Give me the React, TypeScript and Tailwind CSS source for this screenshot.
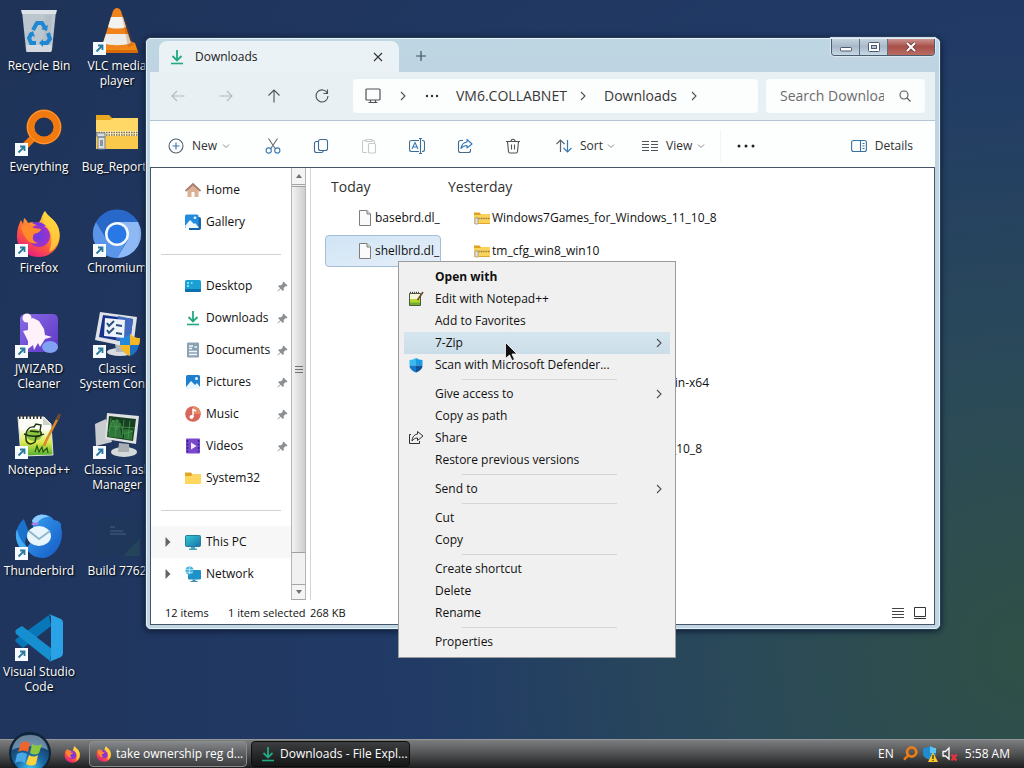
import { Fragment, type ReactNode } from "react";

/* ---------- Shared drawings ---------- */

function FirefoxArt() {
  return (
    <>
      <defs>
        <linearGradient id="fxBody" x1="0.85" y1="0" x2="0.25" y2="1">
          <stop offset="0" stopColor="#fff44f" />
          <stop offset="0.35" stopColor="#ffa436" />
          <stop offset="0.65" stopColor="#ff5a3c" />
          <stop offset="1" stopColor="#e31587" />
        </linearGradient>
        <radialGradient id="fxGlobe">
          <stop offset="0" stopColor="#6a3be0" />
          <stop offset="1" stopColor="#a330c8" />
        </radialGradient>
      </defs>
      <path
        d="M30 1c2 5 10 8 13 16 6 15-4 30-19 30C10 47 1 37 2 25c0-6 2-11 4-15l2 4 1-6c2 1 3 3 4 5 3-1 6-1 8 1 3-1 4-3 5-5 1-3 2-6 4-8z"
        fill="url(#fxBody)"
      />
      <path d="M30 1c2 5 10 8 13 16 4 11-1 22-9 25 3-8 4-20-2-25-5-4-5-10-2-16z" fill="#ffd43c" opacity="0.8" />
      <circle cx="24" cy="26" r="11" fill="url(#fxGlobe)" />
      <path d="M6 17c5-3 9-2 13 1l7 1c-1 4-5 4-7 5-3 5 0 8 4 9-7 2-14-3-17-16z" fill="#ff8a2c" />
      <path d="M17 13c5-2 10-1 14 3l-5 0c-3 0-5-1-9-3z" fill="#7a35dc" />
    </>
  );
}

function DownloadArt() {
  return (
    <>
      <path d="M8 1v10M3.5 7 8 11.5 12.500 7" fill="none" stroke="#22a884" strokeWidth="1.8" />
      <path d="M2 14.500h12" stroke="#22a884" strokeWidth="1.600" />
    </>
  );
}

function EverythingArt() {
  return (
    <>
      <path d="M18 29 6 41" stroke="#f07a10" strokeWidth="7" />
      <circle cx="29" cy="18" r="13.5" fill="none" stroke="#f07a10" strokeWidth="8" />
      <circle cx="29" cy="18" r="16.500" fill="none" stroke="#ff9a3c" strokeWidth="1" />
    </>
  );
}

function NotepadArt() {
  return (
    <>
      <defs>
        <linearGradient id="nppPage" x1="0" y1="0" x2="0" y2="1">
          <stop offset="0.3" stopColor="#fbfdf6" />
          <stop offset="0.65" stopColor="#dbe84a" />
          <stop offset="1" stopColor="#4caf2e" />
        </linearGradient>
      </defs>
      <path d="M3 5h26l7 7 2 31-32 1z" fill="url(#nppPage)" stroke="#dfe3da" />
      <path d="M4 5h24" stroke="#333" strokeWidth="4" strokeDasharray="1.5 2" />
      <path d="M28 5v8h8z" fill="#ccd3c4" />
      <ellipse cx="19" cy="23" rx="8" ry="6" fill="#8ac43f" />
      <path d="M11 27c-1-8 3-13 8-12l2-3 5 1-1 6c3 3 0 6-4 6l-1 5c-5 4-9 1-9-3zM9 22c6 3 15 3 20 0M15 19l9 1" fill="none" stroke="#1d2f12" strokeWidth="1.400" />
      <path d="m20 40 2-6 2 6 3-5 1 5 4-4 1 5" fill="none" stroke="#225511" strokeWidth="1.200" />
      <path d="M44 4 31 29l-2 5" stroke="#d98a25" strokeWidth="2.600" />
      <path d="M45 2 42 8" stroke="#6b4a2a" strokeWidth="2.600" />
    </>
  );
}

function ZipFolderArt() {
  return (
    <>
      <path d="M3 6h13l4 4h25v12H3z" fill="#eaa820" />
      <path d="M3 11h14l3-2h25v31H3z" fill="#ffd866" />
      <path d="M3 25h42v15H3z" fill="#f8c94a" />
      <path d="M3 24.500h42" stroke="#fff1bd" strokeWidth="5" />
      <path d="M3 23.500h42M3 26h42" stroke="#7b6a49" strokeWidth="1.500" strokeDasharray="1.500 1" />
      <path d="M4 24h8v4H4zM5 28h7v12H5z" fill="#d9dfe5" stroke="#7b838c" />
      <path d="M7 31h3v6H7z" fill="#8c949d" />
    </>
  );
}

function Badge() {
  return (
    <>
      <rect x="0" y="34" width="13" height="13" fill="#f7fbff" />
      <path d="M3.500 43.500 9 38M5 37.500h4.500V42" fill="none" stroke="#2b7a9e" strokeWidth="1.800" />
    </>
  );
}

function PictureArt() {
  return (
    <>
      <rect x="1" y="1" width="14" height="14" rx="1.500" fill="#1c80cf" />
      <path d="m1 13 5-6 4 4 2-2 3 4v2H1z" fill="#e6f5ff" />
      <circle cx="11.500" cy="4.500" r="1.500" fill="#e6f5ff" />
    </>
  );
}

function MonitorArt() {
  return (
    <>
      <defs>
        <linearGradient id="pcScreen" x1="0" y1="0" x2="1" y2="1">
          <stop offset="0" stopColor="#36cbd4" />
          <stop offset="1" stopColor="#1671a8" />
        </linearGradient>
      </defs>
      <rect x="0.500" y="1.500" width="15" height="11" rx="1" fill="url(#pcScreen)" stroke="#247d9b" />
      <path d="M6 13h4v1.500H6zM4 14.500h8V16H4z" fill="#44a3c1" />
    </>
  );
}

/* ---------- Desktop ---------- */

type DesktopItem = { label: string; art: ReactNode; shortcut?: boolean };

const desktopItems: DesktopItem[] = [
  {
    label: "Recycle Bin",
    art: (
      <>
        <path d="M7 3h34l-4 39c0 1-1 2-2 2H12c-1 0-1-1-1-2z" fill="#bcc6cf" />
        <path d="M6 2h36l-1 4H7z" fill="#dde3e7" />
        <path d="m30 7 7 0-3 36h-6z" fill="#aab4be" opacity="0.5" />
        <path d="m11 37 26 0-1 7H12z" fill="#dadfe2" opacity="0.800" />
        <path d="m18 22 4-7h5l3 5M33 25l2 6-3 4h-6M21 35h-5l-2-5 3-5" fill="none" stroke="#2087d3" strokeWidth="4" />
        <path d="m26 21 6 2 1-6zM28 31l-4 4 4 4zM13 26l5-3 2 6z" fill="#2087d3" />
      </>
    ),
  },
  { label: "Everything", shortcut: true, art: <EverythingArt /> },
  { label: "Firefox", shortcut: true, art: <FirefoxArt /> },
  {
    label: "JWIZARD Cleaner",
    shortcut: true,
    art: (
      <>
        <defs>
          <linearGradient id="jw" x1="0" y1="0" x2="1" y2="1">
            <stop offset="0" stopColor="#8a6be8" />
            <stop offset="1" stopColor="#5e35c4" />
          </linearGradient>
        </defs>
        <rect x="5" y="3" width="38" height="38" rx="5" fill="url(#jw)" />
        <ellipse cx="35" cy="36" rx="8" ry="6" fill="#7fa3f2" />
        <circle cx="12" cy="7" r="4.500" fill="#fff4fb" />
        <path d="m13 9 5-2 6 3 5 8 1 6 7 2-7 2-5 8-2-4-4 7-1-5-5 4 0-8-5-10 5-1z" fill="#fff1f9" />
      </>
    ),
  },
  { label: "Notepad++", shortcut: true, art: <NotepadArt /> },
  {
    label: "Thunderbird",
    shortcut: true,
    art: (
      <>
        <defs>
          <linearGradient id="tb" x1="0" y1="0" x2="1" y2="1">
            <stop offset="0" stopColor="#39a5f4" />
            <stop offset="1" stopColor="#1458c4" />
          </linearGradient>
        </defs>
        <path d="M9 6c-8 6-10 18-5 28l10 4c-5-6-5-12 0-16 0-6-3-9-5-16z" fill="#1a72cc" />
        <path d="M2 16c-3 8 0 17 7 22l8-1C8 32 4 25 2 16z" fill="#43aaf2" />
        <path d="M17 8c3-8 16-9 22-1 6 1 8 4 7 7 4 14-5 30-18 31-8 0-14-4-17-10 8-6 8-18 6-27z" fill="url(#tb)" />
        <path d="M17 8c3-7 12-8 17-4-5 0-9 1-13 8z" fill="#8ccaff" />
        <path d="M16 11c3-2 6-2 8 0-3 1-6 2-8 0z" fill="#bb7ae8" />
        <ellipse cx="24" cy="23" rx="12" ry="10" fill="#e8f5fd" />
        <path d="m14 18 10 8 11-8" fill="none" stroke="#91b8ca" strokeWidth="2" />
      </>
    ),
  },
  {
    label: "Visual Studio Code",
    shortcut: true,
    art: (
      <>
        <path d="m36 12-28 22-7-6c-1-1-1-2 0-3L34 1z" fill="#0877b9" />
        <path d="m2 15 5-3 30 23-2 12L1 20c-1-2-1-4 1-5z" fill="#168fd1" />
        <path d="m34 0 12 5c1 1 2 2 2 3v31c0 2-1 3-2 4l-12 5c1-1 2-2 2-4V4c0-2-1-3-2-4z" fill="#29a3e6" />
      </>
    ),
  },
  {
    label: "VLC media player",
    shortcut: true,
    art: (
      <>
        <path d="m9 35 3-2h25l5 2 3 9H4z" fill="#f28a16" />
        <path d="M4 42h41v3H4z" fill="#d96a08" />
        <path d="M20 3c2-4 6-4 8 0l11 35c-6 4-24 4-30 0z" fill="#f0831c" />
        <path d="m18 9 12 0 3 10c-5 2-13 2-18 0z" fill="#f2f2ee" />
        <path d="m13 26 22 0 3 9c-7 3-21 3-28 0z" fill="#eeece8" />
        <path d="M29 8h2l10 29-6 2z" fill="#a34c08" opacity="0.25" />
      </>
    ),
  },
  { label: "Bug_Reports", art: <ZipFolderArt /> },
  {
    label: "Chromium",
    shortcut: true,
    art: (
      <>
        <circle cx="24" cy="24" r="24" fill="#2f75dd" />
        <path d="M24 12h21a24 24 0 0 1-21 36l11-18z" fill="#8fb9f5" />
        <path d="M3 12a24 24 0 0 0 21 36l10-18-20 0z" fill="#5b95ea" />
        <path d="M3 12a24 24 0 0 1 42 0H24l-10 18z" fill="#2868c8" />
        <circle cx="24" cy="24" r="12" fill="#f4f9ff" />
        <circle cx="24" cy="24" r="9.500" fill="#2878e6" />
      </>
    ),
  },
  {
    label: "Classic System Con...",
    shortcut: true,
    art: (
      <>
        <ellipse cx="27" cy="41" rx="13" ry="4" fill="#d8dce0" />
        <path d="m22 31 12 2-3 8h-8z" fill="#aeb5bd" />
        <path d="m7 1 37 5-4 31L2 29z" fill="#dfe3e6" />
        <path d="m10 4 30 4-3 24L6 26z" fill="#17318d" />
        <path d="m25 5 15 3-3 24-14-3z" fill="#4169bd" />
        <path d="m12 7 20 2-1 18-20-2z" fill="#eef3fb" />
        <path d="m14 12 2 3 5-5M14 19l2 3 5-5M23 14l6 1M23 22l6 1" fill="none" stroke="#27517f" strokeWidth="2" />
        <path d="M27 27c5 0 7-2 10-4v11H27z" fill="#2489dc" />
        <path d="M37 23c3 2 5 4 10 4 0 3 0 5-1 7h-9zM27 34h10v11c-5-2-9-6-10-11z" fill="#f5b824" />
        <path d="M37 34h9c-1 5-4 9-9 11z" fill="#1c72c6" />
      </>
    ),
  },
  {
    label: "Classic Task Manager",
    shortcut: true,
    art: (
      <>
        <path d="m2 12 11-5 6 23-16 4z" fill="#c9cdcf" />
        <ellipse cx="31" cy="40" rx="13" ry="5" fill="#d5d9da" />
        <path d="m26 31 10 1v8H25z" fill="#a8aeb1" />
        <path d="m14 1 32 3-3 28-31-5z" fill="#dfe2e1" />
        <path d="m16 4 27 3-3 22-26-4z" fill="#173f22" />
        <path d="m15 25 4-17h7l3 18zM31 17l9 1-1 10-8-1z" fill="#2f7438" />
        <path d="M15 20 20 8l3 10 4-7 4 11 9-3M18 6l-2 17M24 7l-2 18M31 8l-2 18M37 9l-2 18M16 14l26 2" fill="none" stroke="#44984c" strokeWidth="0.800" />
      </>
    ),
  },
  {
    label: "Build 7762",
    art: (
      <>
        <rect x="1" y="5" width="46" height="38" fill="#1e375b" />
        <path d="M30 43 47 25v18z" fill="#23445a" />
        <path d="M17 14h5M17 18h13M17 21h16" stroke="#4c6180" />
      </>
    ),
  },
];

function DesktopIcon({ item }: { item: DesktopItem }) {
  return (
    <button className="flex h-[101px] w-[78px] flex-col items-center gap-[2px]">
      <svg viewBox="0 0 48 48" className="size-12 shrink-0 overflow-visible">
        {item.art}
        {item.shortcut && <Badge />}
      </svg>
      <span className="w-[76px] text-center leading-[15px] text-white [text-shadow:1px_1px_2px_#000]">{item.label}</span>
    </button>
  );
}

/* ---------- Explorer window ---------- */

function Chevron({ className = "" }: { className?: string }) {
  return (
    <svg viewBox="0 0 10 10" className={`size-[10px] shrink-0 ${className}`} fill="none" stroke="#505050" strokeWidth="1.100">
      <path d="m3 1 4 4-4 4" />
    </svg>
  );
}

function DownChevron() {
  return (
    <svg viewBox="0 0 8 8" className="size-2 shrink-0" fill="none" stroke="#8b8b8b">
      <path d="m1 2.500 3 3 3-3" />
    </svg>
  );
}

function IconButton({ label, children }: { label: string; children: ReactNode }) {
  return (
    <button aria-label={label} className="flex h-8 w-12 shrink-0 items-center justify-center">
      <svg viewBox="0 0 16 16" className="size-4" fill="none" stroke="#4d5358" strokeWidth="1.100">
        {children}
      </svg>
    </button>
  );
}

function TitleBar() {
  return (
    <div className="flex h-[34px] items-start rounded-t-md bg-linear-to-b from-[#bed7e3] to-[#bfd3e2]">
      <div className="ml-[13px] mt-[3px] flex h-[31px] w-60 items-center rounded-t-lg bg-[#ebf2f5] pl-[10px] pr-4">
        <svg viewBox="0 0 16 16" className="size-4">
          <DownloadArt />
        </svg>
        <span className="ml-[10px] flex-1 font-medium text-[#202020]">Downloads</span>
        <button aria-label="Close tab">
          <svg viewBox="0 0 10 10" className="size-[10px]" stroke="#333" strokeWidth="1.100">
            <path d="m1 1 8 8M9 1 1 9" />
          </svg>
        </button>
      </div>
      <button aria-label="New tab" className="ml-4 mt-3">
        <svg viewBox="0 0 12 12" className="size-3" stroke="#40515c" strokeWidth="1.200">
          <path d="M6 1v10M1 6h10" />
        </svg>
      </button>
      <div className="ml-auto mr-[5px] flex h-[18px] overflow-hidden rounded-b border border-t-0 border-[#4d5d70] shadow-[0_0_1px_1px_#dceaf2]">
        <button aria-label="Minimize" className="flex w-7 items-center justify-center border-r border-[#5e6e80] bg-linear-to-b from-[#c9d7e2] via-[#a9b8c7] to-[#c7d9e6]">
          <svg viewBox="0 0 14 12" className="h-3 w-[14px]">
            <rect x="1.500" y="6.500" width="11" height="3.500" rx="0.800" fill="#fff" stroke="#4a5870" />
          </svg>
        </button>
        <button aria-label="Maximize" className="flex w-7 items-center justify-center border-r border-[#5e6e80] bg-linear-to-b from-[#c9d7e2] via-[#a9b8c7] to-[#c7d9e6]">
          <svg viewBox="0 0 14 12" className="h-3 w-[14px]">
            <rect x="1.500" y="1.500" width="11" height="9" rx="1" fill="#fff" stroke="#4a5870" />
            <rect x="4.500" y="4.500" width="5" height="3" fill="#b8c8d6" stroke="#4a5870" />
          </svg>
        </button>
        <button aria-label="Close" className="flex w-[46px] items-center justify-center bg-linear-to-b from-[#cf9c98] via-[#a8504a] to-[#b96c62]">
          <svg viewBox="0 0 12 10" className="h-[10px] w-3">
            <path d="m2 1 8 8M10 1 2 9" stroke="#65302c" strokeWidth="3.600" />
            <path d="m2 1 8 8M10 1 2 9" stroke="#fff" strokeWidth="2.200" />
          </svg>
        </button>
      </div>
    </div>
  );
}

function NavBar() {
  return (
    <div className="ml-1 mr-[5px] flex h-[49px] items-center border-b border-[#b3c5d3] bg-[#e9f0f4] pl-1 pr-[10px]">
      <IconButton label="Back">
        <path d="M14.500 8H2M7 3 2 8l5 5" stroke="#b4babd" />
      </IconButton>
      <IconButton label="Forward">
        <path d="M1.500 8H14M9 3l5 5-5 5" stroke="#b4babd" />
      </IconButton>
      <IconButton label="Up">
        <path d="M8 14.500V2M2.500 7.500 8 2l5.500 5.500" />
      </IconButton>
      <IconButton label="Refresh">
        <path d="M13.500 5.500A6 6 0 1 0 14 8M13.500 1.500v4h-4" />
      </IconButton>
      <nav aria-label="Address" className="ml-[7px] flex h-[34px] min-w-0 flex-1 items-center rounded bg-[#fcfdfd] pl-3 text-sm text-[#383838]">
        <svg viewBox="0 0 16 16" className="size-4 shrink-0" fill="none" stroke="#4d5358" strokeWidth="1.200">
          <path d="M2 1h12q1 0 1 1v9q0 1-1 1H2q-1 0-1-1V2q0-1 1-1zM5.500 12v2.500M10.500 12v2.500M3.500 14.500h9" />
        </svg>
        <Chevron className="ml-[17px]" />
        <svg viewBox="0 0 14 4" className="ml-[17px] h-1 w-[14px] shrink-0" fill="#303030">
          <circle cx="2" cy="2" r="1.200" />
          <circle cx="7" cy="2" r="1.200" />
          <circle cx="12" cy="2" r="1.200" />
        </svg>
        <a href="#collabnet" className="ml-[17px] w-[106px] whitespace-nowrap">VM6.COLLABNET</a>
        <Chevron className="ml-4" />
        <a href="#downloads" className="ml-4 w-[69px] whitespace-nowrap">Downloads</a>
        <Chevron className="ml-4" />
      </nav>
      <label className="ml-2 flex h-[34px] w-[159px] items-center justify-between rounded bg-[#fcfdfd] px-[14px]">
        <input aria-label="Search Downloads" placeholder="Search Downloads" className="w-[104px] bg-transparent text-sm outline-none placeholder:text-[#6b6b6b]" />
        <svg viewBox="0 0 12 12" className="size-3" fill="none" stroke="#555" strokeWidth="1.100">
          <circle cx="5" cy="5" r="4" />
          <path d="m8 8 3.500 3.500" />
        </svg>
      </label>
    </div>
  );
}

function CommandBar() {
  return (
    <div className="ml-1 mr-[5px] flex h-[46px] items-center bg-[#fdfefe] pl-[18px] pr-[22px] pt-1 text-[#303030]">
      <button className="flex w-[81px] items-center">
        <svg viewBox="0 0 16 16" className="size-4" fill="none" stroke="#54606c" strokeWidth="1.100">
          <circle cx="8" cy="8" r="7" />
          <path d="M8 4.500v7M4.500 8h7" stroke="#3474b0" />
        </svg>
        <span className="ml-2 w-[30px] text-left">New</span>
        <DownChevron />
      </button>
      <IconButton label="Cut">
        <path d="M3.500 0.500 10.500 11M12.500 0.500 5.500 11" stroke="#666b70" />
        <circle cx="3.700" cy="12.500" r="2.600" stroke="#3a7ab8" />
        <circle cx="12.300" cy="12.500" r="2.600" stroke="#3a7ab8" />
      </IconButton>
      <IconButton label="Copy">
        <rect x="5.500" y="1.500" width="9" height="11" rx="2" stroke="#3d6d96" />
        <path d="M5.500 3.500h-2q-2 0-2 2v7q0 2 2 2h5q1.500 0 2-2" stroke="#3d6d96" />
      </IconButton>
      <IconButton label="Paste">
        <path d="M5 2.500H2.500q-1 0-1 1v10q0 1 1 1H6M11 2.500h1.500q1 0 1 1V5M5 1.500h6v2H5z" stroke="#c7cbce" />
        <rect x="7.500" y="5.500" width="7" height="9.500" rx="1" stroke="#c7cbce" />
      </IconButton>
      <IconButton label="Rename">
        <path d="M10 2.500H2.500q-2 0-2 2v7q0 2 2 2H10M13 2.500h.5q2 0 2 2v7q0 2-2 2H13" stroke="#3d6d96" />
        <path d="M3 11 6 4.500 9 11M4 9h4" stroke="#3478ba" />
        <path d="M11.500 1v14M10 .5h3M10 15.500h3" stroke="#3d6d96" />
      </IconButton>
      <IconButton label="Share">
        <path d="M6 2.500H3.500q-2 0-2 2v8q0 2 2 2h8q2 0 2-2V11" stroke="#456b8c" />
        <path d="M10 1.500 15 6l-5 4V7.500c-3 0-4.500 1-6 3 .4-4 2.500-6 6-6.500z" stroke="#3478ba" strokeLinejoin="round" />
      </IconButton>
      <IconButton label="Delete">
        <path d="M1 3.500h14M6 3.500C6 .5 10 .5 10 3.500M2.500 3.500l1 10q.2 1.500 1.500 1.500h6q1.300 0 1.500-1.500l1-10M6.500 6.500v5M9.500 6.500v5" />
      </IconButton>
      <button className="ml-[19px] flex w-[86px] items-center">
        <svg viewBox="0 0 16 16" className="size-4" fill="none" strokeWidth="1.200">
          <path d="M4.500 14V2M.5 6l4-4 4 4" stroke="#59646e" />
          <path d="M11.500 2v12M7.500 10l4 4 4-4" stroke="#3a78b2" />
        </svg>
        <span className="ml-2 w-[27px] text-left">Sort</span>
        <DownChevron />
      </button>
      <button className="flex items-center">
        <svg viewBox="0 0 16 16" className="size-4" stroke="#4d5358">
          <path d="M0 3.500h7M9 3.500h7M0 6.500h7M9 6.500h7M0 9.500h7M9 9.500h7M0 12.500h7M9 12.500h7" />
        </svg>
        <span className="ml-2 w-[31px] text-left">View</span>
        <DownChevron />
      </button>
      <span className="ml-[15px] h-8 w-px bg-[#f3f4f5]" />
      <button aria-label="More" className="ml-4">
        <svg viewBox="0 0 18 4" className="h-1 w-[18px]" fill="#222">
          <circle cx="2" cy="2" r="1.500" />
          <circle cx="9" cy="2" r="1.500" />
          <circle cx="16" cy="2" r="1.500" />
        </svg>
      </button>
      <button className="ml-auto flex items-center gap-2">
        <svg viewBox="0 0 16 16" className="size-4" fill="none" stroke="#3b719d" strokeWidth="1.100">
          <rect x="0.600" y="2.500" width="14.800" height="11" rx="2" />
          <path d="M9.500 2.500v11M11.500 5.500h2M11.500 8h2M11.500 10.500h2" />
        </svg>
        Details
      </button>
    </div>
  );
}

type Place = { name: string; art: ReactNode; pinned?: boolean; expandable?: boolean };

const places: (Place | null)[] = [
  {
    name: "Home",
    art: (
      <>
        <path d="M2.500 7 8 2l5.500 5v8h-4v-5h-3v5h-4z" fill="#dcb094" />
        <path d="m0.500 9 7.500-7 7.500 7" fill="none" stroke="#a77e72" strokeWidth="1.800" />
      </>
    ),
  },
  {
    name: "Gallery",
    art: (
      <>
        <path d="M4 3h10q2 0 2 2v9q0 2-2 2H4z" fill="#1764a8" />
        <rect x="0" y="0.500" width="13.500" height="13.500" rx="1.500" fill="#218bdd" />
        <path d="m0 12 5-6 4 4 1-1 3.500 4v1H1z" fill="#f0f8ff" />
        <circle cx="10" cy="3.700" r="1.300" fill="#f0f8ff" />
      </>
    ),
  },
  null,
  {
    name: "Desktop",
    pinned: true,
    art: (
      <>
        <rect x="0" y="2" width="16" height="12" rx="1.500" fill="#1aa0d2" />
        <path d="M0 11h16v2q0 1-1 1H1q-1 0-1-1z" fill="#0c6fae" />
        <path d="M2 5h2M2 8h2M6 5h1.500" stroke="#a6f5ff" strokeWidth="1.500" />
      </>
    ),
  },
  { name: "Downloads", pinned: true, art: <DownloadArt /> },
  {
    name: "Documents",
    pinned: true,
    art: (
      <>
        <rect x="2" y="0.500" width="12" height="15" rx="1" fill="#8ba2b4" />
        <path d="M4 4h4M4 6.500h3M4 9.500h8M4 12.500h8M9.500 5h2.500" stroke="#f3f8fb" strokeWidth="1.300" />
      </>
    ),
  },
  { name: "Pictures", pinned: true, art: <PictureArt /> },
  {
    name: "Music",
    pinned: true,
    art: (
      <>
        <circle cx="8" cy="8" r="7.800" fill="#d9665c" />
        <path d="M8 .2A7.800 7.800 0 0 1 15.800 8H8z" fill="#e58a62" />
        <path d="M8 11V3.500l3 1.500" fill="none" stroke="#fff" strokeWidth="1.500" />
        <circle cx="6.500" cy="11" r="2" fill="#fff" />
      </>
    ),
  },
  {
    name: "Videos",
    pinned: true,
    art: (
      <>
        <rect x="1" y="0.500" width="14" height="15" rx="1" fill="#7a48cc" />
        <path d="M2.500 2v12M13.500 2v12" stroke="#3a2187" strokeWidth="1.500" strokeDasharray="2 1.500" />
        <path d="m6 4.500 5.500 3.500L6 11.500z" fill="#f5eaff" />
      </>
    ),
  },
  {
    name: "System32",
    art: (
      <>
        <path d="M0 2.500h6l1.500 2H16V9H0z" fill="#e2a52c" />
        <path d="M0 6h6l1.500-1.500H16V14H0z" fill="#ffd75e" />
      </>
    ),
  },
  null,
  { name: "This PC", expandable: true, art: <MonitorArt /> },
  {
    name: "Network",
    expandable: true,
    art: (
      <>
        <rect x="3" y="4" width="13" height="9.500" rx="1" fill="#1f91c9" />
        <path d="M7.500 13.500h3V15h-3zM5.500 15h7v1h-7z" fill="#3c8cab" />
        <circle cx="4.500" cy="4.500" r="4" fill="#4bb3df" />
        <path d="M1 3.500h7M1.500 6.500h6M4.500 1v7" stroke="#c7f0ff" strokeWidth="0.700" />
      </>
    ),
  },
];

function Sidebar() {
  return (
    <nav aria-label="Places" className="w-[140px] shrink-0 pb-[10px] pt-[6px]">
      {places.map((place, i) =>
        place === null ? (
          <div key={i} className="flex h-8 items-center px-[10px]">
            <hr className="w-full border-[#cfd3d6]" />
          </div>
        ) : (
          <a key={i} href={`#${place.name}`} className={`flex h-8 items-center pl-[14px] pr-[3px] ${place.name === "This PC" ? "bg-[#f7f7f7]" : ""}`}>
            <span className="w-5">
              {place.expandable && (
                <svg viewBox="0 0 6 10" className="h-[10px] w-[6px]" fill="#646464">
                  <path d="m0.500 0 5 5-5 5z" />
                </svg>
              )}
            </span>
            <svg viewBox="0 0 16 16" className="size-4 shrink-0">
              {place.art}
            </svg>
            <span className="ml-[5px] flex-1 whitespace-nowrap text-[#111]">{place.name}</span>
            {place.pinned && (
              <svg viewBox="0 0 12 12" className="size-[11px] shrink-0" fill="#8c9196">
                <path d="M7 0.500 11.500 5l-1.500 1-.8-.3L7.300 7.600l.2 2.200-1.200 1L4 8.500 1 11.500l-.5-.5 3-3L1.200 5.700l1-1.200 2.200.2 1.900-1.900L6 2z" />
              </svg>
            )}
          </a>
        ),
      )}
    </nav>
  );
}

function ScrollBar() {
  return (
    <div className="flex w-[15px] shrink-0 flex-col border-x border-[#b5b5b5] bg-[#f1f1f1]">
      <button aria-label="Scroll up" className="flex h-[17px] items-center justify-center border-b border-[#a5a5a5] bg-[#f4f4f4]">
        <svg viewBox="0 0 6 4" className="h-1 w-[6px]" fill="#707070">
          <path d="m0 4 3-4 3 4z" />
        </svg>
      </button>
      <div className="mt-px flex h-[367px] items-center justify-center border-y border-[#a0a0a0] bg-linear-to-r from-[#f3f3f3] via-[#e0e0e0] to-[#cfcfcf]">
        <svg viewBox="0 0 8 8" className="h-2 w-2" stroke="#717171">
          <path d="M0 .5h8M0 3.500h8M0 6.500h8" />
        </svg>
      </div>
      <button aria-label="Scroll down" className="mt-auto flex h-4 items-center justify-center border-y border-[#a5a5a5] bg-[#f4f4f4]">
        <svg viewBox="0 0 6 4" className="h-1 w-[6px]" fill="#707070">
          <path d="m0 0 3 4 3-4z" />
        </svg>
      </button>
    </div>
  );
}

function FileIcon() {
  return (
    <svg viewBox="0 0 14 16" className="h-4 w-[14px] shrink-0">
      <path d="M1.500.5h7.500l3.500 3.500v11.500h-11z" fill="#fafafa" stroke="#7d7d7d" />
      <path d="M9 .5V4h3.500" fill="#ddd" stroke="#7d7d7d" />
    </svg>
  );
}

function ArchiveIcon() {
  return (
    <svg viewBox="0 0 16 16" className="size-4 shrink-0">
      <path d="M0 2.500h5.500l1.500 1.500h8v3H0z" fill="#e0a020" />
      <path d="M0 5h6l1-1h9v10H0z" fill="#fbd25a" />
      <path d="M2 8.500h14" stroke="#8a7442" strokeWidth="1.600" strokeDasharray="1 0.700" />
      <path d="M1 8h3v6H1z" fill="#dfe3e6" stroke="#9a9484" strokeWidth="0.700" />
      <path d="M4 13.500h12" stroke="#e0a82c" />
    </svg>
  );
}

function Files() {
  return (
    <main className="flex min-w-0 flex-1 border-l border-[#d3d6d8] pl-[14px] pt-[6px] text-[#111]">
      <section className="w-[116px] shrink-0">
        <h2 className="pl-[6px] text-sm leading-[26px] text-[#303030]">Today</h2>
        <div className="flex flex-col gap-px pt-[2px]">
          <button className="flex h-8 items-center gap-[3px] pl-[33px]">
            <FileIcon />
            basebrd.dl_
          </button>
          <button className="flex h-8 items-center gap-[3px] rounded-sm border border-[#a5bfd6] bg-linear-to-br from-[#d0e5f5] to-[#e6eef9] pl-8">
            <FileIcon />
            shellbrd.dl_
          </button>
        </div>
      </section>
      <section className="w-[268px] shrink-0">
        <h2 className="pl-[7px] text-sm leading-[26px] text-[#303030]">Yesterday</h2>
        <div className="flex flex-col gap-px pt-[2px]">
          <button className="flex h-8 items-center gap-[2px] whitespace-nowrap pl-[33px]">
            <ArchiveIcon />
            Windows7Games_for_Windows_11_10_8
          </button>
          <button className="flex h-8 items-center gap-[2px] whitespace-nowrap pl-[33px]">
            <ArchiveIcon />
            tm_cfg_win8_win10
          </button>
          <button className="mt-[99px] flex h-8 items-center justify-end">win-x64</button>
          <button className="mt-[33px] flex h-8 items-center justify-end pr-[7px]">_10_8</button>
        </div>
      </section>
    </main>
  );
}

function Explorer() {
  return (
    <section
      aria-label="Downloads"
      className="absolute left-[145px] right-[83px] top-[37px] rounded-md border border-[#2b3d55] bg-[#bfd5e4] shadow-[0_1px_6px_#0b1830] outline-1 -outline-offset-2 outline-[#e3f2f8]"
    >
      <TitleBar />
      <NavBar />
      <CommandBar />
      <div className="mb-1 ml-1 mr-[5px] border border-[#465465] bg-white">
        <div className="flex">
          <Sidebar />
          <ScrollBar />
          <span className="w-1" />
          <Files />
        </div>
        <footer className="flex h-6 items-center pl-[14px] pr-2 pt-[2px] text-[11px] text-[#111]">
          <span className="w-[63px]">12 items</span>
          <span className="w-[82px]">1 item selected</span>
          <span>268 KB</span>
          <div className="ml-auto flex items-center gap-[10px]">
            <button aria-label="Details view">
              <svg viewBox="0 0 12 12" className="size-3" stroke="#444">
                <path d="M0 1.500h12M0 4.500h12M0 7.500h12M0 10.500h12" />
              </svg>
            </button>
            <button aria-label="Large icons view">
              <svg viewBox="0 0 12 12" className="size-3" fill="none" stroke="#333">
                <path d="M.5.5h11v9H.5zM0 11.500h12" />
              </svg>
            </button>
          </div>
        </footer>
      </div>
    </section>
  );
}

/* ---------- Context menu ---------- */

type Entry = { label: string; icon?: ReactNode; submenu?: boolean; bold?: boolean; active?: boolean };

const menuGroups: Entry[][] = [
  [
    { label: "Open with", bold: true },
    {
      label: "Edit with Notepad++",
      icon: (
        <svg viewBox="0 0 16 16" className="size-4">
          <path d="M1.500 2.500h11v12h-11z" fill="#f4f6da" stroke="#4d5645" />
          <path d="M2 8h10v6H2z" fill="#b9d532" />
          <path d="M2 11.500h10V14H2z" fill="#6faf2c" />
          <path d="M2 1.500h10" stroke="#444" strokeWidth="1.500" strokeDasharray="1 1" />
          <path d="M15 1 9.500 9" stroke="#6d4a22" strokeWidth="1.600" />
        </svg>
      ),
    },
    { label: "Add to Favorites" },
    { label: "7-Zip", submenu: true, active: true },
    {
      label: "Scan with Microsoft Defender...",
      icon: (
        <svg viewBox="0 0 16 16" className="size-4">
          <path d="M8 1c2 1.300 4 2 6.500 2v5.500H8z" fill="#1b9be2" />
          <path d="M8 1C6 2.300 4 3 1.500 3v5.500H8z" fill="#38baf0" />
          <path d="M1.500 8.500H8V15.500C4 14 1.500 11.500 1.500 8.500z" fill="#1678c8" />
          <path d="M14.500 8.500H8V15.500c4-1.500 6.500-4 6.500-7z" fill="#0c559d" />
        </svg>
      ),
    },
  ],
  [
    { label: "Give access to", submenu: true },
    { label: "Copy as path" },
    {
      label: "Share",
      icon: (
        <svg viewBox="0 0 16 16" className="size-4" fill="none" stroke="#303030" strokeLinejoin="round">
          <path d="M3 4.500H1.500v9h10V11" />
          <path d="M9.500 1.500 15 6l-5.500 4.500V8C7 8 5.500 9 4 11c.3-4 2-6.500 5.500-7z" />
        </svg>
      ),
    },
    { label: "Restore previous versions" },
  ],
  [{ label: "Send to", submenu: true }],
  [{ label: "Cut" }, { label: "Copy" }],
  [{ label: "Create shortcut" }, { label: "Delete" }, { label: "Rename" }],
  [{ label: "Properties" }],
];

function ContextMenu() {
  return (
    <div
      role="menu"
      className="absolute left-[398px] top-[261px] w-[278px] border border-[#9b9b9b] bg-[#f0f0f0] px-[5px] py-1 text-[#111]"
    >
      {menuGroups.map((group, g) => (
        <Fragment key={g}>
          {g > 0 && (
            <div role="separator" className="flex h-[7px] items-center pl-[58px] pr-[53px]">
              <span className="h-px w-full bg-[#d4d4d4]" />
            </div>
          )}
          {group.map((entry) => (
            <button
              key={entry.label}
              role="menuitem"
              className={`flex h-[22px] w-full items-center pl-1 pr-[6px] ${entry.active ? "bg-linear-to-b from-[#d5e6ef] to-[#cbdde8]" : ""} ${entry.bold ? "font-bold" : ""}`}
            >
              <span className="w-[27px]">{entry.icon}</span>
              <span className="flex-1 whitespace-nowrap text-left">{entry.label}</span>
              {entry.submenu && <Chevron />}
            </button>
          ))}
        </Fragment>
      ))}
      <svg viewBox="0 0 12 19" className="absolute left-[106px] top-20 h-[19px] w-3">
        <path d="M.5.5v16l4-3.500 2.500 5.500 2.500-1L7 12h5z" fill="#111" stroke="#fff" strokeWidth="0.800" />
      </svg>
    </div>
  );
}

/* ---------- Taskbar ---------- */

function Taskbar() {
  return (
    <footer className="absolute inset-x-0 bottom-0 flex h-[29px] items-center border-t border-[#949799] bg-linear-to-b from-[#7c7d7e] via-[#505152] to-[#1d1e1f] text-white">
      <button aria-label="Start" className="-mt-[3px] ml-2">
        <svg viewBox="0 0 44 44" className="size-11">
          <defs>
            <radialGradient id="orb" cx="0.5" cy="0.9" r="0.8">
              <stop offset="0" stopColor="#3ac6f5" />
              <stop offset="0.45" stopColor="#1b68a4" />
              <stop offset="1" stopColor="#143253" />
            </radialGradient>
          </defs>
          <circle cx="22" cy="22" r="20" fill="url(#orb)" stroke="#102233" strokeWidth="2" />
          <path d="M4 19C6 8 13 4 22 4s16 4 18 15c-10-5-26-5-36 0z" fill="#cfe4f0" opacity="0.450" />
          <path d="M13 12c3-2 6-2 9 0l-2 9c-3-2-6-2-10 0z" fill="#f0642c" />
          <path d="M24 13c3 2 6 2 10 0l-3 9c-3 2-6 2-9 0z" fill="#8cc63e" />
          <path d="M9 23c4-2 7-2 10 0l-2 9c-3-2-6-2-10 0z" fill="#49a9e8" />
          <path d="M21 24c3 2 6 2 9 0l-2 9c-3 2-6 2-10 0z" fill="#ffd23c" />
        </svg>
      </button>
      <button aria-label="Firefox" className="ml-3">
        <svg viewBox="0 0 48 48" className="size-[17px]">
          <FirefoxArt />
        </svg>
      </button>
      <button className="ml-2 flex h-[26px] w-[158px] items-center rounded-sm border border-[#8a8c8d] bg-linear-to-b from-[#85888a] via-[#5c5e60] to-[#3c3e3f] pl-[6px]">
        <svg viewBox="0 0 48 48" className="size-4 shrink-0">
          <FirefoxArt />
        </svg>
        <span className="ml-1 whitespace-nowrap">take ownership reg d...</span>
      </button>
      <button className="ml-1 flex h-[26px] w-[159px] items-center rounded-sm border border-[#0d0d0d] bg-linear-to-b from-[#3c3e3f] to-[#151616] pl-2">
        <svg viewBox="0 0 16 16" className="size-4 shrink-0">
          <DownloadArt />
        </svg>
        <span className="ml-1 whitespace-nowrap">Downloads - File Expl...</span>
      </button>
      <div className="ml-auto flex items-center pr-[14px]">
        <span className="mr-2">EN</span>
        <svg viewBox="0 0 48 48" className="size-4">
          <EverythingArt />
        </svg>
        <svg viewBox="0 0 16 16" className="ml-1 size-4">
          <path d="M8 0c2 1.500 4 2 6 2v6c0 3-3 5-6 6-3-1-7-3-7-6V2c3 0 5-.5 7-2z" fill="#218bd0" />
          <path d="M8 0c2 1.500 4 2 6 2v5H8z" fill="#58c5f2" />
          <path d="m11 6 5 10H6z" fill="#ffc62c" />
          <path d="M11 9v4M11 14v1" stroke="#3a2a00" strokeWidth="1.300" />
        </svg>
        <svg viewBox="0 0 16 16" className="ml-1 size-4" fill="none">
          <path d="M1 5.500h2.500L7 2v11L3.500 10H1z" stroke="#fff" strokeWidth="1.300" />
          <path d="m9.500 8.500 5 6M14.500 8.500l-5 6" stroke="#e8323c" strokeWidth="2.300" />
        </svg>
        <span className="ml-[7px]">5:58 AM</span>
      </div>
    </footer>
  );
}

export default function App() {
  return (
    <div className="relative min-h-screen overflow-hidden bg-[radial-gradient(circle_at_100%_85%,#2f5046_0%,#2b4a58_22%,#213b66_50%,#203761_70%,#1f3358_100%)] font-['Open_Sans','Noto_Sans',sans-serif] text-xs">
      <div className="grid grid-flow-col grid-rows-[repeat(7,101px)] justify-start pt-2">
        {desktopItems.map((item) => (
          <DesktopIcon key={item.label} item={item} />
        ))}
      </div>
      <Explorer />
      <ContextMenu />
      <Taskbar />
    </div>
  );
}
